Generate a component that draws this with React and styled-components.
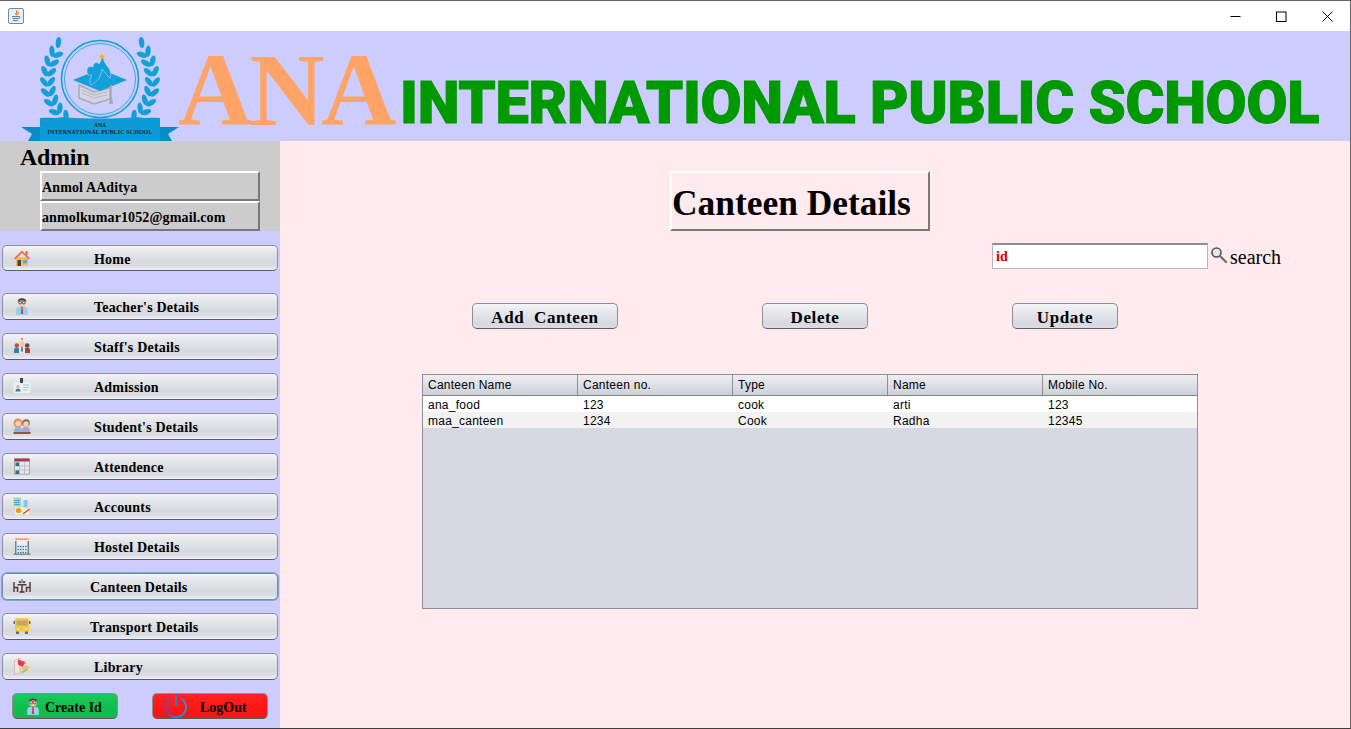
import React from "react";
import styled, { createGlobalStyle, css } from "styled-components";

const GlobalStyle = createGlobalStyle`
  html, body {
    margin: 0;
    padding: 0;
    background: #ffffff;
  }
  * {
    box-sizing: border-box;
  }
`;

const serif = `"Liberation Serif", "Times New Roman", serif`;
const sans = `"Liberation Sans", Arial, sans-serif`;

const nimbus = css`
  background: linear-gradient(180deg, #f3f4f6 0%, #e4e5e9 30%, #d6d9df 65%, #d8dbe0 82%, #eef0f3 100%);
  border: 1px solid #8e8f96;
  border-bottom-color: #5c5d64;
  border-radius: 5px;
  font-family: ${serif};
  font-weight: bold;
  color: #000000;
  cursor: pointer;
`;

const Window = styled.div`
  width: 1351px;
  height: 729px;
  display: flex;
  flex-direction: column;
  border-top: 1px solid #646464;
  border-right: 1px solid #646464;
  border-bottom: 1px solid #3c3c3c;
  overflow: hidden;
`;

const TitleBar = styled.div`
  height: 30px;
  flex: none;
  display: flex;
  align-items: center;
  justify-content: space-between;
  padding-left: 8px;
  background: #ffffff;
`;

const WindowControls = styled.div`
  display: flex;
`;

const ControlButton = styled.div`
  width: 46px;
  height: 30px;
  display: flex;
  align-items: center;
  justify-content: center;
`;

const Banner = styled.header`
  height: 110px;
  flex: none;
  display: flex;
  align-items: flex-start;
  background: #ccccff;
  padding-left: 20px;
`;

const LogoWrap = styled.div`
  width: 160px;
  height: 106px;
  margin-top: 4px;
  flex: none;
`;

const BrandShort = styled.div`
  font-family: ${serif};
  font-size: 104px;
  line-height: 100px;
  font-weight: bold;
  color: #ffa366;
  letter-spacing: -3.5px;
  margin: 9px 0 0 -2px;
  width: 222px;
  flex: none;
`;

const BrandLong = styled.div`
  font-family: Roboto, "Open Sans", sans-serif;
  font-size: 59.5px;
  font-weight: 900;
  line-height: 76px;
  color: #009900;
  -webkit-text-stroke: 1px #009900;
  white-space: nowrap;
  margin-top: 34px;
  letter-spacing: -0.32px;
`;

const Body = styled.div`
  flex: 1;
  display: flex;
  min-height: 0;
`;

const Sidebar = styled.aside`
  width: 280px;
  flex: none;
  display: flex;
  flex-direction: column;
  background: #ccccff;
`;

const Profile = styled.div`
  height: 90px;
  flex: none;
  background: #cccccc;
  display: flex;
  flex-direction: column;
  padding: 2px 0 0 20px;
`;

const AdminLabel = styled.div`
  height: 28px;
  font-family: ${serif};
  font-weight: bold;
  font-size: 24px;
  line-height: 28px;
  letter-spacing: -0.3px;
  color: #000;
`;

const ProfileField = styled.div`
  width: 220px;
  height: 30px;
  margin-left: 20px;
  display: flex;
  align-items: center;
  padding-top: 4px;
  border: 2px solid;
  border-color: #ffffff #77777c #77777c #ffffff;
  font-family: ${serif};
  font-weight: bold;
  font-size: 14px;
  letter-spacing: 0.12px;
  color: #000;
`;

const Nav = styled.nav`
  display: flex;
  flex-direction: column;
  align-items: flex-start;
  gap: 13px;
  padding: 14px 0 0 2px;
`;

const NavButton = styled.button`
  ${nimbus}
  width: 276px;
  height: ${(p) => (p.$home ? 26 : 27)}px;
  margin-bottom: ${(p) => (p.$home ? 9 : 0)}px;
  display: flex;
  align-items: center;
  padding: 3px 0 0 10px;
  font-size: 14px;
  letter-spacing: 0.2px;
  ${(p) =>
    p.$active &&
    css`
      box-shadow: 0 0 0 1px #7ea6d2;
      border-color: #6d8fb5;
    `}
`;

const NavIcon = styled.span`
  width: 18px;
  height: 18px;
  flex: none;
  display: flex;
  margin-top: -4px;
`;

const NavLabel = styled.span`
  margin-left: ${(p) => (p.$wide ? 59 : 63)}px;
  white-space: nowrap;
`;

const FooterRow = styled.div`
  display: flex;
  gap: 34px;
  padding: 13px 0 0 12px;
`;

const FooterButton = styled.button`
  ${nimbus}
  width: ${(p) => p.$width}px;
  height: 26px;
  display: flex;
  align-items: center;
  padding: 0 0 0 11px;
  font-size: 14px;
  background: ${(p) =>
    p.$danger
      ? "linear-gradient(180deg, #ff2323 0%, #fd1616 60%, #f01818 100%)"
      : "linear-gradient(180deg, #1ac958 0%, #0fbf4d 60%, #14b552 100%)"};
`;

const FooterLabel = styled.span`
  margin-left: ${(p) => p.$gap}px;
  padding-top: 3px;
`;

const Main = styled.main`
  flex: 1;
  background: #ffebed;
  display: flex;
  flex-direction: column;
  padding-top: 30px;
`;

const PageTitle = styled.h1`
  margin: 0 0 0 390px;
  width: 260px;
  height: 60px;
  display: flex;
  align-items: center;
  padding: 4px 0 0;
  border: 2px solid;
  border-color: #ffffff #77777c #77777c #ffffff;
  font-family: ${serif};
  font-weight: bold;
  font-size: 35.4px;
  color: #000;
  white-space: nowrap;
`;

const SearchRow = styled.div`
  display: flex;
  align-items: center;
  margin: 12px 0 0 712px;
  height: 26px;
`;

const SearchInput = styled.div`
  width: 216px;
  height: 26px;
  background: #ffffff;
  border: 1px solid #b5b5ba;
  border-top: 2px solid #8e8e92;
  display: flex;
  align-items: center;
  padding-left: 3px;
  font-family: ${serif};
  font-weight: bold;
  font-size: 14px;
  color: #d00000;
`;

const SearchIconSlot = styled.span`
  display: flex;
  margin: -2px 0 0 2px;
`;

const SearchLabel = styled.span`
  margin-left: 2px;
  padding-top: 2px;
  font-family: ${serif};
  font-size: 20px;
  color: #000;
`;

const ActionRow = styled.div`
  display: flex;
  gap: 144px;
  margin: 34px 0 0 192px;
`;

const ActionButton = styled.button`
  ${nimbus}
  width: ${(p) => p.$width}px;
  height: 26px;
  padding: 3px 0 0;
  font-size: 17px;
  white-space: pre;
  letter-spacing: 0.6px;
  background: linear-gradient(180deg, #f3f4f7 0%, #e6e8ec 35%, #d6d9e0 80%, #d9dce3 100%);
`;

const TableBox = styled.div`
  width: 776px;
  height: 235px;
  margin: 45px 0 0 142px;
  background: #d6d9e2;
  border: 1px solid #8e8f96;
  font-family: ${sans};
  font-size: 12px;
  letter-spacing: 0.25px;
  color: #000;
`;

const TableRow = styled.div`
  display: grid;
  grid-template-columns: repeat(5, 155px);
  height: 16px;
  align-items: start;
  background: ${(p) => (p.$alt ? "#f2f2f2" : "#ffffff")};
`;

const HeaderRow = styled(TableRow)`
  height: 21px;
  align-items: stretch;
  background: linear-gradient(180deg, #eceef1 0%, #dfe1e6 45%, #d2d5dc 85%, #c9ccd3 100%);
  border-bottom: 1px solid #85868d;
`;

const HeaderCell = styled.div`
  display: flex;
  align-items: center;
  padding-left: 5px;
  border-right: 1px solid #8e8f96;
  &:last-child {
    border-right: none;
  }
`;

const Cell = styled.div`
  padding-left: 5px;
  line-height: 18px;
  height: 16px;
`;

const JavaIcon = () => (
  <svg width="16" height="16" viewBox="0 0 16 16">
    <rect x="0.5" y="0.5" width="15" height="15" rx="1.5" fill="#e9eef3" stroke="#6f8aa5" />
    <path d="M8.5 2.5c1.5 1.5-2 3 0 4.8M10 4c.8 1-1 1.6 0 2.8" fill="none" stroke="#e4702a" strokeWidth="1.2" />
    <path d="M4 8.5h7M4.5 10.5h6M5 12.5h5" stroke="#5b7c9b" strokeWidth="1" />
    <path d="M11 8.5c1.5 0 1.5 2-.5 2" fill="none" stroke="#5b7c9b" />
  </svg>
);

const MinimizeGlyph = () => (
  <svg width="11" height="11" viewBox="0 0 11 11">
    <path d="M0.5 5.5h10" stroke="#000" />
  </svg>
);

const MaximizeGlyph = () => (
  <svg width="11" height="11" viewBox="0 0 11 11">
    <rect x="0.5" y="1" width="9.5" height="9.5" fill="none" stroke="#000" />
  </svg>
);

const CloseGlyph = () => (
  <svg width="11" height="11" viewBox="0 0 11 11">
    <path d="M0.5 0.5l10 10M10.5 0.5l-10 10" stroke="#000" />
  </svg>
);

const laurelLeaves = [];
for (let i = 0; i < 9; i++) {
  const tangent = 138 + i * 11;
  const angle = tangent * (Math.PI / 180);
  const r = 53;
  laurelLeaves.push({
    x: 80 + Math.cos(angle) * (r + 3),
    y: 45 - Math.sin(angle) * (r + 3),
    rot: -tangent + 55,
  });
  if (i > 0) {
    laurelLeaves.push({
      x: 80 + Math.cos(angle) * (r - 4),
      y: 45 - Math.sin(angle) * (r - 4),
      rot: -tangent + 130,
    });
  }
}

const Logo = () => (
  <svg width="160" height="106" viewBox="0 0 160 106">
    <g fill="#12a0d8">
      {laurelLeaves.map((l, i) => (
        <g key={i}>
          <ellipse cx={l.x} cy={l.y} rx="5.6" ry="2.7" transform={`rotate(${l.rot} ${l.x} ${l.y})`} />
          <ellipse
            cx={160 - l.x}
            cy={l.y}
            rx="5.6"
            ry="2.7"
            transform={`rotate(${-l.rot} ${160 - l.x} ${l.y})`}
          />
        </g>
      ))}
    </g>
    <circle cx="80" cy="44" r="38.5" fill="#ccccff" stroke="#12a0d8" strokeWidth="1.6" />
    <circle cx="80" cy="44" r="35.5" fill="none" stroke="#12a0d8" strokeWidth="0.8" />
    <path d="M59 50l15 7 16-4v11l-16 5-15-6z" fill="#d4d4e4" stroke="#a9a9b2" strokeWidth="1.5" />
    <path d="M62 55l12 5 13-3M62 58l12 5 13-3" fill="none" stroke="#a9a9b2" strokeWidth="0.7" />
    <path d="M53 45l27-11 27 11-27 11z" fill="#12a0d8" />
    <path
      d="M68 40c-3-7 1-10 5-8 0-4 4-6 6-3 2-3 3-6 3-9 1 4 3 8 5 11 3 3 5 8 3 12-3-2-5-6-8-9-1 7-4 13-11 16-2-3-1-7 1-10z"
      fill="#12a0d8"
      stroke="#ccccff"
      strokeWidth="0.6"
    />
    <path d="M82 18l1 2.6h2.6l-2.1 1.6.8 2.6-2.3-1.6-2.3 1.6.8-2.6-2.1-1.6H81z" fill="#f0b323" />
    <path d="M91 50v14" stroke="#a9a9b2" strokeWidth="1.5" />
    <path d="M90 62h2l1 7h-4z" fill="#a9a9b2" />
    <path d="M1 92h19v14H8l4-7z" fill="#0a8cc6" />
    <path d="M159 92h-19v14h12l-4-7z" fill="#0a8cc6" />
    <path d="M20 83c10-1 14 1 24-1 12 2 60 2 72 0 10 2 14 0 24 1v23H20z" fill="#0c9bd5" />
    <text x="80" y="92" textAnchor="middle" fontFamily={serif} fontWeight="bold" fontSize="5.6" fill="#1b2a3a">
      ANA
    </text>
    <text
      x="80"
      y="98.8"
      textAnchor="middle"
      fontFamily={serif}
      fontWeight="bold"
      fontSize="6"
      textLength="105"
      fill="#1b2a3a"
    >
      INTERNATIONAL PUBLIC SCHOOL
    </text>
  </svg>
);

const Teacher = ({ size = 18 }) => (
  <svg width={size} height={size} viewBox="2 0 14 17">
    <circle cx="9" cy="5" r="3.8" fill="#f4cdb0" />
    <path d="M4.800 4.500C4.800 .2 13.200 .2 13.200 4.500c-1-1.500-7.400-1.500-8.400 0z" fill="#3d4a52" />
    <circle cx="7.300" cy="5.200" r="1.400" fill="none" stroke="#333" strokeWidth="0.700" />
    <circle cx="10.700" cy="5.200" r="1.400" fill="none" stroke="#333" strokeWidth="0.700" />
    <path d="M3.500 17v-5c0-2 2-3 5.500-3s5.500 1 5.500 3v5z" fill="#8fd3ee" />
    <path d="M8.400 9h1.200l.5 7H7.900z" fill="#e0403f" />
  </svg>
);

const HomeIcon = () => (
  <svg width="18" height="18" viewBox="0 0 18 18">
    <rect x="3" y="8" width="12" height="9" fill="#fbc14e" />
    <path d="M0.8 9.5L9 1.5l8 8-1.3 1L9 4 2.2 10.5z" fill="#f2674d" />
    <rect x="12.5" y="2" width="2" height="4" fill="#f2674d" />
    <rect x="4.5" y="11" width="3.5" height="6" fill="#37474f" />
    <rect x="10" y="11" width="4" height="3.5" fill="#5aa9c9" />
  </svg>
);

const StaffIcon = () => (
  <svg width="18" height="18" viewBox="0 0 18 18">
    <circle cx="3.800" cy="8.500" r="2.300" fill="#c94f3d" />
    <circle cx="14.200" cy="8.500" r="2.300" fill="#6b4a3a" />
    <circle cx="9" cy="6.500" r="2.400" fill="#f1c7a6" />
    <path d="M8.200 1h1.600v2H8.200z" fill="#e67a3c" />
    <path d="M1 16v-3c0-1.500 1.200-2.500 2.800-2.500s2.800 1 2.800 2.500v3z" fill="#3a7ea8" />
    <path d="M11.400 16v-3c0-1.500 1.200-2.500 2.800-2.500S17 11.500 17 13v3z" fill="#b33c3c" />
    <path d="M6 16v-4.500C6 10 7.300 9.200 9 9.200s3 .8 3 2.300V16z" fill="#e5e5e5" />
    <path d="M8.500 9.500h1l.3 5H8.200z" fill="#37474f" />
  </svg>
);

const AdmissionIcon = () => (
  <svg width="18" height="18" viewBox="0 0 18 18">
    <rect x="0.500" y="5" width="17" height="11" fill="#e8f1f6" />
    <rect x="7" y="1" width="3" height="5" fill="#37474f" />
    <circle cx="5" cy="9.500" r="1.700" fill="#e9b58f" />
    <path d="M2.500 14.500c0-2 1-3 2.500-3s2.500 1 2.500 3z" fill="#2f7fa8" />
    <path d="M10 8h6M10 10.500h6M10 13h5" stroke="#a9c6d3" strokeWidth="1" />
  </svg>
);

const StudentIcon = () => (
  <svg width="18" height="18" viewBox="0 0 18 18">
    <circle cx="5" cy="6" r="4.500" fill="#ee8a55" />
    <circle cx="5.200" cy="6.500" r="2.800" fill="#f6d2b4" />
    <circle cx="13" cy="6" r="3.800" fill="#8a6350" />
    <circle cx="13" cy="7" r="2.700" fill="#f6d2b4" />
    <path d="M1 15v-2c0-1.800 1.500-3 4-3s4 1.200 4 3v2z" fill="#8fb6dc" />
    <path d="M9 15v-2c0-1.800 1.500-3 4-3s4 1.200 4 3v2z" fill="#a7a7d6" />
    <rect x="0.500" y="15" width="17" height="2" fill="#8a5a44" />
  </svg>
);

const AttendIcon = () => (
  <svg width="18" height="18" viewBox="0 0 18 18">
    <rect x="1.500" y="2" width="15" height="15" fill="#e6e8ea" stroke="#8c8f93" strokeWidth="0.700" />
    <rect x="1.500" y="1.500" width="15" height="3" fill="#a53a5a" />
    <path d="M6.500 4.500V17M11.500 4.500V17M1.500 9h15M1.500 13h15" stroke="#a5a8ac" strokeWidth="0.600" />
    <path d="M2.500 9h3.500V5.500H2.500zM2.500 17h3.500v-3.500H2.500z" fill="#28718f" />
  </svg>
);

const AccountsIcon = () => (
  <svg width="18" height="18" viewBox="0 0 18 18">
    <rect x="0.500" y="0.500" width="7.500" height="9" fill="#9be29b" />
    <path d="M1.500 3.500h5.500M1.500 5.500h5.500M1.500 7.500h5.500" stroke="#2a6fe0" strokeWidth="1" strokeDasharray="1 .8" />
    <rect x="10.500" y="3" width="4" height="8" fill="#7fc6e8" />
    <rect x="2" y="10.500" width="14" height="7" fill="#eaf6c9" />
    <circle cx="5.500" cy="13.500" r="2.600" fill="#f79420" />
    <path d="M10 17l6.500-5" stroke="#e53935" strokeWidth="1.300" />
  </svg>
);

const HostelIcon = () => (
  <svg width="18" height="18" viewBox="0 0 18 18">
    <rect x="1" y="0.500" width="16" height="3.500" fill="#f5ead7" />
    <path d="M2.500 2.200h13" stroke="#d5504f" strokeWidth="1.200" strokeDasharray="1.300 .7" />
    <rect x="2" y="4" width="14" height="13" fill="#f0f0ee" />
    <path d="M2 4h1.500v13H2zM14.500 4H16v13h-1.500z" fill="#6d8593" />
    <path d="M4.500 9.500h9M4.500 12.500h9M4.500 15.500h9" stroke="#2f7fc1" strokeWidth="1.600" strokeDasharray="1.600 .9" />
    <rect x="0.500" y="16.700" width="17" height="0.800" fill="#37474f" />
  </svg>
);

const CanteenIcon = () => (
  <svg width="18" height="18" viewBox="0 0 18 18">
    <g fill="none" stroke="#5a2f2c" strokeWidth="1.400">
      <path d="M1 5v10M1 10.500h3.500V15" />
      <path d="M17 5v10M17 10.500h-3.500V15" />
      <path d="M9 7v8M6.500 15h5" />
    </g>
    <rect x="4.500" y="7" width="9" height="1.500" fill="#37474f" />
    <circle cx="7" cy="5" r="1.300" fill="#6a5656" />
    <circle cx="11" cy="5" r="1.300" fill="#6a5656" />
    <path d="M9 2v4" stroke="#6a5656" strokeWidth="1" />
  </svg>
);

const BusIcon = () => (
  <svg width="18" height="18" viewBox="0 0 18 18">
    <rect x="2" y="1" width="14" height="13.500" rx="2" fill="#f9c440" />
    <rect x="3.500" y="3.500" width="11" height="5" fill="#b9a877" />
    <path d="M0.500 4h1.500v3H0.500zM16 4h1.500v3H16z" fill="#7a6a3c" />
    <rect x="3" y="14.500" width="3" height="2.500" fill="#6a6a60" />
    <rect x="12" y="14.500" width="3" height="2.500" fill="#6a6a60" />
    <circle cx="5" cy="12" r="1" fill="#fff4c4" />
    <circle cx="13" cy="12" r="1" fill="#fff4c4" />
  </svg>
);

const LibraryIcon = () => (
  <svg width="18" height="18" viewBox="0 0 18 18">
    <path d="M1.500 4L7 1v15l-5.500 1.500z" fill="#f3e3d0" stroke="#b9a99a" strokeWidth="0.600" />
    <path d="M5 2.500l7.500 2.500L9.500 10 5 7.500z" fill="#e8385a" />
    <path d="M8 11l5.500-3 3.500 2-5.500 4z" fill="#f5c25c" />
    <path d="M7.500 15l6-3 2 1-5.500 3z" fill="#8fc97a" />
  </svg>
);

const PowerIcon = () => (
  <svg width="24" height="26" viewBox="0 0 24 26">
    <defs>
      <linearGradient id="powerStroke" x1="0" y1="0" x2="1" y2="0">
        <stop offset="0" stopColor="#7a3fb0" />
        <stop offset="1" stopColor="#12a0e0" />
      </linearGradient>
    </defs>
    <path d="M7 5.500a10 10 0 1 0 10 0" fill="none" stroke="url(#powerStroke)" strokeWidth="1.800" />
    <path d="M12 1v12" stroke="#3a78c8" strokeWidth="1.800" />
  </svg>
);

const SearchGlyph = () => (
  <svg width="18" height="18" viewBox="0 0 18 18">
    <circle cx="6.500" cy="6.500" r="4.500" fill="#e8e8e8" stroke="#555" strokeWidth="1.600" />
    <path d="M10 10l6 6" stroke="#6e6e6e" strokeWidth="2.400" strokeLinecap="round" />
  </svg>
);

const navItems = [
  { label: "Home", Icon: HomeIcon, home: true },
  { label: "Teacher's Details", Icon: Teacher },
  { label: "Staff's Details", Icon: StaffIcon },
  { label: "Admission", Icon: AdmissionIcon },
  { label: "Student's Details", Icon: StudentIcon },
  { label: "Attendence", Icon: AttendIcon },
  { label: "Accounts", Icon: AccountsIcon },
  { label: "Hostel Details", Icon: HostelIcon },
  { label: "Canteen Details", Icon: CanteenIcon, wide: true, active: true },
  { label: "Transport Details", Icon: BusIcon, wide: true },
  { label: "Library", Icon: LibraryIcon },
];

const columns = ["Canteen Name", "Canteen no.", "Type", "Name", "Mobile No."];

const rows = [
  ["ana_food", "123", "cook", "arti", "123"],
  ["maa_canteen", "1234", "Cook", "Radha", "12345"],
];

const App = () => {
  return (
    <>
      <GlobalStyle />
      <Window>
        <TitleBar>
          <JavaIcon />
          <WindowControls>
            <ControlButton>
              <MinimizeGlyph />
            </ControlButton>
            <ControlButton>
              <MaximizeGlyph />
            </ControlButton>
            <ControlButton>
              <CloseGlyph />
            </ControlButton>
          </WindowControls>
        </TitleBar>
        <Banner>
          <LogoWrap>
            <Logo />
          </LogoWrap>
          <BrandShort>ANA</BrandShort>
          <BrandLong>INTERNATIONAL PUBLIC SCHOOL</BrandLong>
        </Banner>
        <Body>
          <Sidebar>
            <Profile>
              <AdminLabel>Admin</AdminLabel>
              <ProfileField>Anmol AAditya</ProfileField>
              <ProfileField>anmolkumar1052@gmail.com</ProfileField>
            </Profile>
            <Nav>
              {navItems.map(({ label, Icon, home, wide, active }) => (
                <NavButton key={label} $home={home} $active={active}>
                  <NavIcon>
                    <Icon />
                  </NavIcon>
                  <NavLabel $wide={wide}>{label}</NavLabel>
                </NavButton>
              ))}
            </Nav>
            <FooterRow>
              <FooterButton $width={106}>
                <Teacher size={18} />
                <FooterLabel $gap={3}>Create Id</FooterLabel>
              </FooterButton>
              <FooterButton $width={116} $danger>
                <PowerIcon />
                <FooterLabel $gap={12}>LogOut</FooterLabel>
              </FooterButton>
            </FooterRow>
          </Sidebar>
          <Main>
            <PageTitle>Canteen Details</PageTitle>
            <SearchRow>
              <SearchInput>id</SearchInput>
              <SearchIconSlot>
                <SearchGlyph />
              </SearchIconSlot>
              <SearchLabel>search</SearchLabel>
            </SearchRow>
            <ActionRow>
              <ActionButton $width={146}>{"Add  Canteen"}</ActionButton>
              <ActionButton $width={106}>Delete</ActionButton>
              <ActionButton $width={106}>Update</ActionButton>
            </ActionRow>
            <TableBox>
              <HeaderRow>
                {columns.map((c) => (
                  <HeaderCell key={c}>{c}</HeaderCell>
                ))}
              </HeaderRow>
              {rows.map((row, i) => (
                <TableRow key={row[0]} $alt={i % 2 === 1}>
                  {row.map((value, j) => (
                    <Cell key={j}>{value}</Cell>
                  ))}
                </TableRow>
              ))}
            </TableBox>
          </Main>
        </Body>
      </Window>
    </>
  );
};

export default App;
